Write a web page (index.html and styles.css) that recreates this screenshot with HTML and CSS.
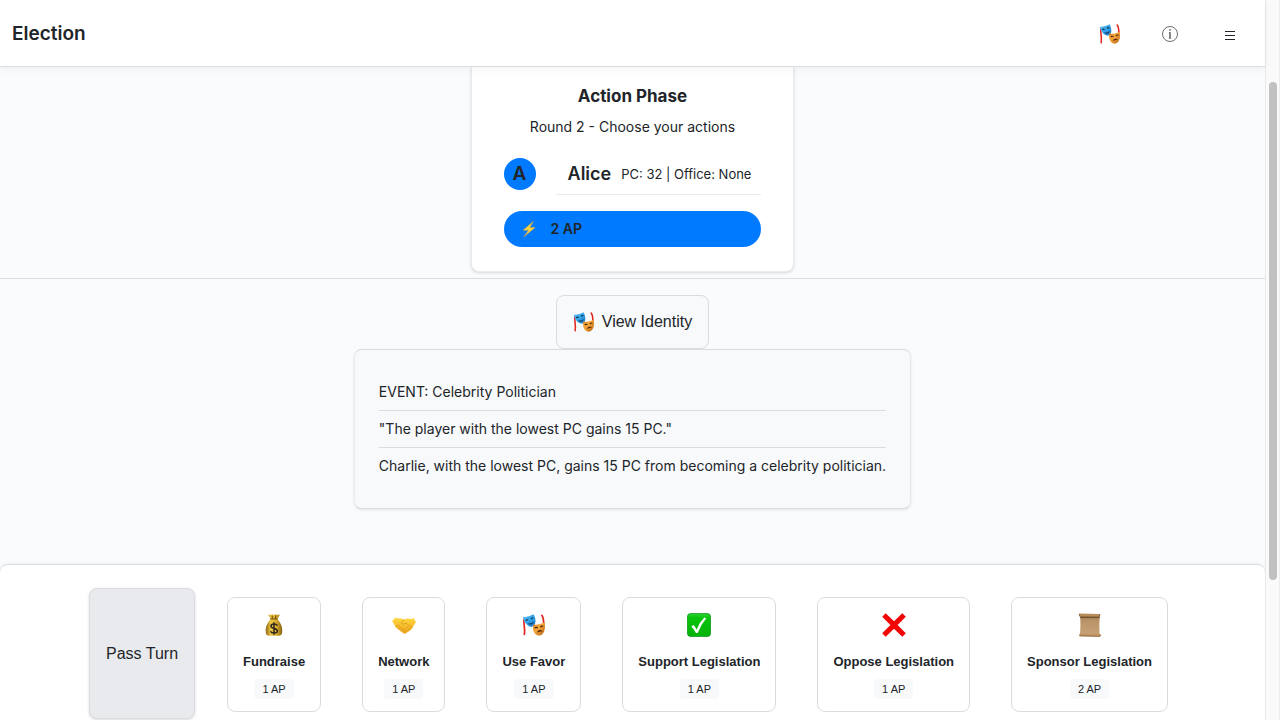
FILE: index.html
```html
<!DOCTYPE html>
<html lang="en">
<head>
<meta charset="utf-8">
<title>Election</title>
<link rel="stylesheet" href="styles.css">
</head>
<body>
<svg class="sprite" aria-hidden="true">
  <defs>
    <linearGradient id="blue" x1="0" y1="0" x2="1" y2="1"><stop offset="0" stop-color="#5cc4f8"/><stop offset=".6" stop-color="#2f9de6"/><stop offset="1" stop-color="#1468b0"/></linearGradient>
    <linearGradient id="orange" x1="0" y1="0" x2="1" y2="1"><stop offset="0" stop-color="#d97f1f"/><stop offset=".45" stop-color="#f7a63c"/><stop offset="1" stop-color="#b35c10"/></linearGradient>
    <linearGradient id="gold" x1="0" x2="1"><stop offset="0" stop-color="#8a6414"/><stop offset=".3" stop-color="#eec646"/><stop offset=".65" stop-color="#d9ac2d"/><stop offset="1" stop-color="#83600f"/></linearGradient>
    <linearGradient id="hand" x1="0" y1="0" x2="0" y2="1"><stop offset="0" stop-color="#ffd843"/><stop offset="1" stop-color="#eda51c"/></linearGradient>
    <linearGradient id="green" x1="0" y1="0" x2="0" y2="1"><stop offset="0" stop-color="#2fd035"/><stop offset=".2" stop-color="#08c40c"/><stop offset="1" stop-color="#05b20a"/></linearGradient>
    <linearGradient id="paper" x1="0" y1="0" x2="0" y2="1"><stop offset="0" stop-color="#a17d54"/><stop offset=".25" stop-color="#b99468"/><stop offset="1" stop-color="#c6a276"/></linearGradient>
  </defs>
  <symbol id="masks" viewBox="0 0 24 24">
    <path d="M2 6C1.400 11 3.300 15 2.400 21.500" fill="none" stroke="#e0251f" stroke-width="1.700" stroke-linecap="round"/>
    <path d="M19.800 2.300C22 5 21.800 8 21.600 13" fill="none" stroke="#e0251f" stroke-width="1.700" stroke-linecap="round"/>
    <path d="M1 4C4.500 4.300 8.300 3 11.600 1.300C13.500 4.500 14.200 9 12.600 11.800C11.500 13.800 9 14.200 7 13.200C3.800 11.500 1.500 8 1 4Z" fill="url(#blue)"/>
    <path d="M3.600 7.500Q4.700 6.300 6.100 7M8.800 5.800Q10 4.600 11.300 5.200" fill="none" stroke="#0d2b47" stroke-width="1.200"/>
    <path d="M5.600 10.300Q9 11 11.800 8.600Q11 11.600 8.300 11.700Q6.500 11.600 5.600 10.300Z" fill="#123c66"/>
    <path d="M11.300 11.500C14.500 12.300 19 11.400 22.500 9.300C23.600 13.500 23 18.500 20.500 21C18.500 22.900 15.500 23 13.600 21.300C11 19 10.700 15 11.300 11.500Z" fill="url(#orange)"/>
    <path d="M12.900 15Q14.300 13.900 15.800 15M18.300 14Q19.600 12.700 21.200 13.200" fill="none" stroke="#44240c" stroke-width="1.200"/>
    <path d="M14.800 19.700Q15.500 17.300 17.700 17.100Q19.700 17 20.500 18.500Q17.500 18.100 14.800 19.700Z" fill="#55290a"/>
  </symbol>
  <symbol id="money" viewBox="0 0 24 24">
    <path d="M8.600 6.300L6.200 1.500Q9 2.300 10.300 1.200Q12 2.200 13.700 1.200Q15.200 2.300 17.900 1.500L15.400 6.300C18.500 9.500 21 14 20.100 20Q19.700 22.700 17 22.800H7Q4.300 22.700 3.900 20C3 14 5.500 9.500 8.600 6.300Z" fill="url(#gold)"/>
    <path d="M8.300 5.900H15.700M10 2.500L10.500 5M14 2.500L13.400 5" stroke="#7c5510" stroke-width="1.200"/>
    <path d="M15.400 12.600Q14.500 11 12 11Q9 11 9 13.100Q9 14.900 12 15.400Q15.400 16 15.400 18Q15.400 20 12 20Q9.200 20 8.500 18.200M12 9.200V21.800" fill="none" stroke="#302a20" stroke-width="1.500"/>
  </symbol>
  <symbol id="handshake" viewBox="0 0 24 24">
    <path d="M0 8.300L3.500 4.500Q6.500 6.200 9 5.300L12.300 6.600Q15.500 4.500 19.500 6.200L21.500 4.800L24 9.200Q22 11.500 21 14Q19.500 17 16.500 18.500L13.500 20.600Q12 21 10.500 19.500L3.500 14.300Q2.300 10.500 0 8.300Z" fill="url(#hand)"/>
    <path d="M12.300 6.600L9 10Q10.500 12.500 14 10.200L20.300 14.600M14 13.300L18 16.500M11.700 15L15 18.500M4 13.800L6.200 12L8 13.800M6.200 16.200L8.300 14.200L10 16M8.500 18L10.200 16.400L12.300 18.400" fill="none" stroke="#d99018" stroke-width=".7"/>
  </symbol>
  <symbol id="check" viewBox="0 0 24 24">
    <rect x=".4" y=".4" width="23.200" height="23.200" rx="3.500" fill="url(#green)" stroke="#08951a" stroke-width=".8"/>
    <path d="M4.300 13.500L6.700 11.900Q8.500 14 9.700 16.500Q12.500 9.300 17.300 4.600L19.300 5.300Q14 11.500 10.700 20H8.900Q7.200 16.500 4.300 13.500Z" fill="#fff"/>
  </symbol>
  <symbol id="cross" viewBox="0 0 24 24">
    <path d="M.2 3.700L3.700.2L12 8.300L20.300.2L23.800 3.700L15.600 12L23.800 20.300L20.300 23.800L12 15.700L3.700 23.800L.2 20.300L8.400 12Z" fill="#f20505"/>
  </symbol>
  <symbol id="scroll" viewBox="0 0 24 24">
    <path d="M2 3H21.800Q20.900 12 21.600 22H1.900Q2.900 11 2 3Z" fill="url(#paper)"/>
    <path d="M2.200 4.200H21.600" stroke="#6b4d2c" stroke-width="1.400"/>
    <path d="M1 .9Q1.300.4 2 .4L22 1V3.500L1.300 3.300Z" fill="#b98d5a"/>
    <path d="M1.400 .8V3.300M21.700 1.100V3.400" stroke="#7d5930" stroke-width=".8"/>
    <path d="M1.300 20.800L22.200 21L22.900 22.200L21.800 23.400L1.300 22.900Z" fill="#c39462"/>
    <path d="M1.400 22.900L21.800 23.400L22.800 21.800" fill="none" stroke="#7f5a30" stroke-width=".8"/>
  </symbol>
</svg>
<div class="window">
  <div class="app">
    <header class="topbar">
      <h1 class="brand">Election</h1>
      <nav class="tools" aria-label="Tools">
        <button class="tool" aria-label="Identity"><svg class="icon-mask"><use href="#masks"/></svg></button>
        <button class="tool" aria-label="Information"><svg class="icon-info" viewBox="0 0 16 16"><circle cx="8" cy="8" r="7.500" fill="none" stroke="#44474b" stroke-width=".8"/><circle cx="8" cy="4" r=".8" fill="#212529"/><path d="M8 6.300V12.300" fill="none" stroke="#212529" stroke-width="1.100"/><path d="M6.900 6.600H8M6.700 12.200H9.300" fill="none" stroke="#212529" stroke-width=".5"/></svg></button>
        <button class="tool" aria-label="Menu"><svg class="icon-menu" viewBox="0 0 10 10"><path d="M0 1.500H10M0 5.500H10M0 9.500H10" stroke="#212529" stroke-width="1.200"/></svg></button>
      </nav>
    </header>
    <section class="status">
      <div class="phase">
        <h2 class="phase-title">Action Phase</h2>
        <p class="phase-note">Round 2 - Choose your actions</p>
        <div class="player">
          <span class="avatar">A</span>
          <div class="player-info"><strong class="player-name">Alice</strong><span class="player-stats">PC: 32 | Office: None</span></div>
        </div>
        <div class="points">
          <svg class="icon-bolt" viewBox="0 0 14 16"><path d="M11.500 .3L1 9.300H6.500L2 15.700L13.200 6.500H7.800Z" fill="#ffd345" stroke="#c2a04a" stroke-width=".5"/></svg>
          <span>2 AP</span>
        </div>
      </div>
    </section>
    <main class="board">
      <button class="identity"><svg class="icon-mask"><use href="#masks"/></svg>View Identity</button>
      <ul class="log">
        <li>EVENT: Celebrity Politician</li>
        <li>"The player with the lowest PC gains 15 PC."</li>
        <li>Charlie, with the lowest PC, gains 15 PC from becoming a celebrity politician.</li>
      </ul>
    </main>
    <footer class="actions">
      <button class="pass">Pass Turn</button>
      <div class="action-list">
        <button class="action"><svg class="icon-action"><use href="#money"/></svg><span class="action-name">Fundraise</span><span class="cost">1 AP</span></button>
        <button class="action"><svg class="icon-action"><use href="#handshake"/></svg><span class="action-name">Network</span><span class="cost">1 AP</span></button>
        <button class="action"><svg class="icon-action"><use href="#masks"/></svg><span class="action-name">Use Favor</span><span class="cost">1 AP</span></button>
        <button class="action"><svg class="icon-action"><use href="#check"/></svg><span class="action-name">Support Legislation</span><span class="cost">1 AP</span></button>
        <button class="action"><svg class="icon-action"><use href="#cross"/></svg><span class="action-name">Oppose Legislation</span><span class="cost">1 AP</span></button>
        <button class="action"><svg class="icon-action"><use href="#scroll"/></svg><span class="action-name">Sponsor Legislation</span><span class="cost">2 AP</span></button>
      </div>
    </footer>
  </div>
  <div class="scrollbar" aria-hidden="true"><div class="thumb"></div></div>
</div>
</body>
</html>
```
FILE: styles.css
```css
* { box-sizing: border-box; }

body {
  margin: 0;
  color: #212529;
  background: #fafbfd;
  font-family: Inter, "Liberation Sans", sans-serif;
  font-size: 14px;
  line-height: 20px;
}

h1, h2, p, ul { margin: 0; padding: 0; }
button { color: inherit; font-family: "Liberation Sans", Arial, sans-serif; font-size: 16px; }
svg { display: block; flex: none; }

.sprite { position: absolute; width: 0; height: 0; }

.window { display: grid; grid-template-columns: 1fr 15px; height: 100vh; overflow: hidden; }
.app { display: flex; flex-direction: column; min-width: 0; }

.topbar {
  z-index: 1;
  display: flex;
  align-items: center;
  justify-content: space-between;
  padding: 13px 12px 11px;
  background: #fff;
  border-bottom: 1px solid #dadce0;
  box-shadow: 0 2px 8px rgba(0, 0, 0, 0.05);
}
.brand { font-size: 19px; font-weight: 600; line-height: 24px; }
.tools { display: flex; gap: 14px; }
.tool {
  display: flex;
  align-items: center;
  justify-content: center;
  width: 46px;
  height: 42px;
  padding: 0;
  background: none;
  border: 0;
}
.icon-mask { width: 22px; height: 22px; }
.icon-info { width: 16px; height: 16px; }
.icon-menu { width: 10px; height: 10px; margin-top: 2px; }

.status { display: flex; justify-content: center; padding-bottom: 6px; border-bottom: 1px solid #dadce0; }
.phase {
  padding: 17px 32px 24px;
  background: #fff;
  border: 1px solid #e8eaed;
  border-top: 0;
  border-radius: 0 0 8px 8px;
  box-shadow: 0 1px 3px rgba(0, 0, 0, 0.15);
}
.phase-title { font-size: 17px; font-weight: 700; line-height: 24px; text-align: center; }
.phase-note { margin-top: 9px; text-align: center; }
.player { display: flex; align-items: center; gap: 20px; margin-top: 16px; }
.avatar {
  width: 32px;
  height: 32px;
  border-radius: 50%;
  background: #007bff;
  font-size: 19px;
  font-weight: 600;
  line-height: 32px;
  text-align: center;
}
.player-info {
  display: flex;
  align-items: center;
  gap: 10px;
  padding: 8px 10px 8px 12px;
  border-bottom: 1px solid #e8eaed;
}
.player-name { font-size: 18px; font-weight: 600; line-height: 25px; }
.player-stats { font-size: 13px; }
.points {
  display: flex;
  align-items: center;
  gap: 15px;
  margin-top: 16px;
  padding: 8px 18px;
  border-radius: 18px;
  background: #007bff;
  font-weight: 600;
}
.icon-bolt { width: 14px; height: 16px; }

.board { flex: 1; display: flex; flex-direction: column; align-items: center; padding-top: 16px; }
.identity {
  display: flex;
  align-items: center;
  gap: 7px;
  padding: 15px 16px;
  line-height: 22px;
  background: #f8f9fb;
  border: 1px solid #dadce0;
  border-radius: 8px;
}
.log {
  padding: 24px;
  list-style: none;
  background: #f8f9fb;
  border: 1px solid #dadce0;
  border-left-color: #e8eaed;
  border-right-color: #e8eaed;
  border-radius: 8px;
  box-shadow: 0 1px 3px rgba(0, 0, 0, 0.1);
}
.log li { padding: 8px 0; border-bottom: 1px solid #dadce0; }
.log li:last-child { border-bottom: 0; }

.actions {
  display: flex;
  justify-content: center;
  gap: 24px;
  padding: 23px 24px 1px;
  background: #fff;
  border-top: 1px solid #dadce0;
  border-radius: 8px 8px 0 0;
  box-shadow: 0 -1px 3px rgba(0, 0, 0, 0.05);
}
.pass {
  padding: 16px;
  background: #e8eaed;
  border: 1px solid #dadce0;
  border-radius: 8px;
  box-shadow: 0 1px 3px rgba(0, 0, 0, 0.15);
}
.action-list { display: flex; gap: 41px; padding: 9px 8px 7px; }
.action {
  display: flex;
  flex-direction: column;
  align-items: center;
  padding: 15px 15px 12px;
  background: #fff;
  border: 1px solid #dadce0;
  border-radius: 8px;
}
.icon-action { width: 24px; height: 24px; }
.action-name { margin-top: 17px; font-size: 13px; font-weight: 700; line-height: 16px; }
.cost {
  margin-top: 9px;
  padding: 2px 8px;
  background: #f8f9fb;
  border-radius: 4px;
  font-size: 11px;
  line-height: 16px;
}

.scrollbar { padding: 82px 2px 0 3px; background: #fafafa; border-left: 1px solid #e8e8e8; border-right: 1px solid #ededed; }
.thumb { width: 8px; height: 498px; border-radius: 4px; background: #c1c1c1; }
```
